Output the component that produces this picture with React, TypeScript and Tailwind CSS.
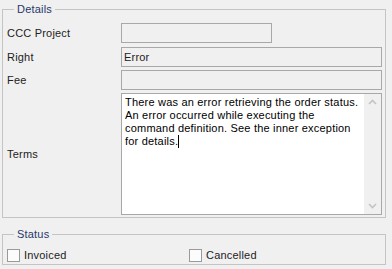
import React from 'react';

const TERMS_LINES = [
    'There was an error retrieving the order status.',
    'An error occurred while executing the',
    'command definition. See the inner exception',
    'for details.',
];

const Chevron: React.FC<{ up?: boolean }> = ({ up }) => (
    <svg width="9" height="6" viewBox="0 0 9 6" className="block">
        <path
            d={up ? 'M1 5 L4.5 1.5 L8 5' : 'M1 1 L4.5 4.5 L8 1'}
            fill="none"
            stroke="#c4c4c4"
            strokeWidth="1.6"
        />
    </svg>
);

const CheckBox: React.FC<{ label: string; className?: string }> = ({ label, className }) => (
    <label className={`flex items-center gap-[4px] ${className ?? ''}`}>
        <span className="w-[13px] h-[13px] border border-[#9a9a9a] bg-[#fcfcfc] shrink-0"></span>
        <span className="text-[#222]">{label}</span>
    </label>
);

export default function App() {
    return (
        <div className="w-[392px] h-[269px] overflow-hidden bg-[#f0f0f0] pt-[3px] font-['Liberation_Sans',Arial,sans-serif] text-[11px] leading-[13px] tracking-[0.2px] text-[#222]">
            <fieldset className="ml-[2px] w-[384px] border border-[#c4c4c4] pl-[4px] pr-[3px] pb-[2px]">
                <legend className="ml-[7px] px-[3px] text-[#26386b]">Details</legend>

                <div className="flex flex-col pt-[7px]">
                    <div className="flex items-center h-[20px]">
                        <span className="w-[114px]">CCC Project</span>
                        <div className="w-[151px] h-[20px] border border-[#a8a8a8]"></div>
                    </div>
                    <div className="flex items-center h-[20px] mt-[4px]">
                        <span className="w-[114px]">Right</span>
                        <div className="w-[261px] h-[20px] border border-[#a8a8a8] px-[2px] flex items-center">Error</div>
                    </div>
                    <div className="flex items-center h-[20px] mt-[3px]">
                        <span className="w-[114px]">Fee</span>
                        <div className="w-[261px] h-[20px] border border-[#a8a8a8]"></div>
                    </div>
                    <div className="flex items-center h-[122px] mt-[3px]">
                        <span className="w-[114px]">Terms</span>
                        <div className="w-[261px] h-[122px] border border-[#a8a8a8] bg-white flex">
                            <div className="flex-1 pl-[3px] pr-[2px] pt-[2px] text-black">
                                {TERMS_LINES.map((line, i) => (
                                    <div key={i}>
                                        {line}
                                        {i === TERMS_LINES.length - 1 && (
                                            <span className="inline-block w-px h-[13px] bg-black align-[-3px]"></span>
                                        )}
                                    </div>
                                ))}
                            </div>
                            <div className="w-[17px] bg-[#f0f0f0] flex flex-col justify-between items-center py-[5px]">
                                <Chevron up />
                                <Chevron />
                            </div>
                        </div>
                    </div>
                </div>
            </fieldset>

            <fieldset className="ml-[2px] mt-[10px] w-[384px] border border-[#c4c4c4] pl-[4px] pr-[3px] pb-[2px]">
                <legend className="ml-[7px] px-[3px] text-[#26386b]">Status</legend>
                <div className="flex items-center h-[14px] mt-[7px]">
                    <CheckBox label="Invoiced" className="w-[182px]" />
                    <CheckBox label="Cancelled" />
                </div>
            </fieldset>
        </div>
    );
}
